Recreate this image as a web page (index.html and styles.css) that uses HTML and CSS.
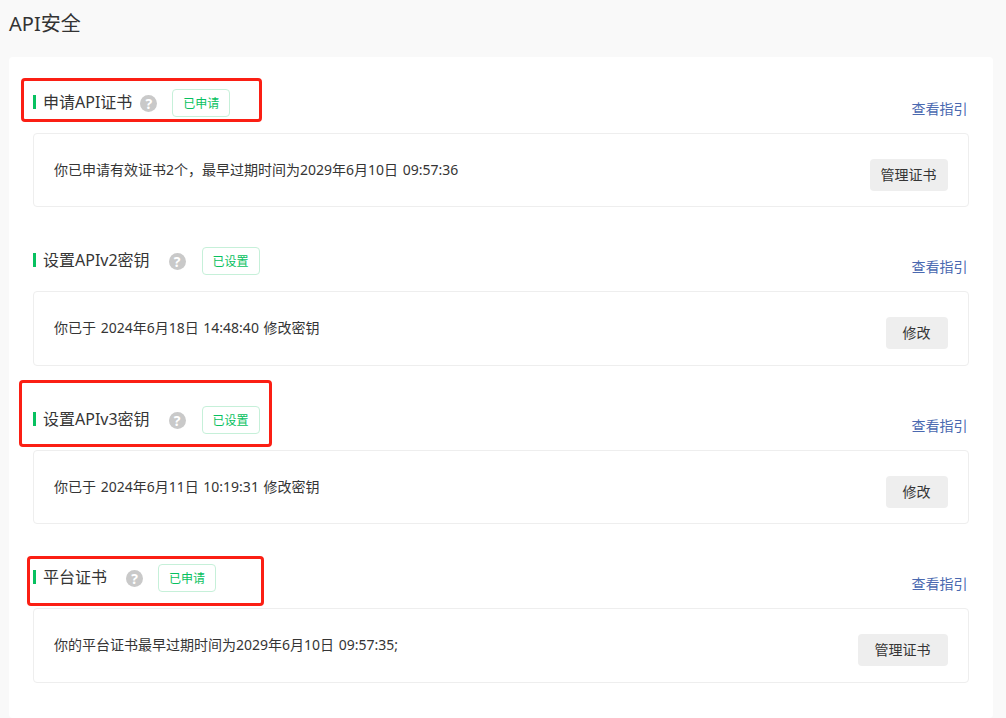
FILE: index.html
```html
<!DOCTYPE html>
<html lang="zh-CN">
<head>
    <meta charset="UTF-8">
    <meta name="viewport" content="width=device-width, initial-scale=1">
    <title>API安全</title>
    <link rel="stylesheet" href="styles.css">
</head>
<body>
<h1 class="page-title">API安全</h1>

<div class="panel">
    <!-- 申请API证书 -->
    <section class="block">
        <div class="block-head">
            <h2 class="block-title">申请API证书</h2>
            <span class="help">?</span>
            <span class="tag">已申请</span>
            <a class="guide" href="#">查看指引</a>
            <div class="mark mark-cert"></div>
        </div>
        <div class="box">
            <p class="box-text">你已申请有效证书2个，最早过期时间为2029年6月10日 09:57:36</p>
            <button class="btn btn-cert">管理证书</button>
        </div>
    </section>

    <!-- 设置APIv2密钥 -->
    <section class="block">
        <div class="block-head">
            <h2 class="block-title">设置APIv2密钥</h2>
            <span class="help help-key">?</span>
            <span class="tag">已设置</span>
            <a class="guide" href="#">查看指引</a>
        </div>
        <div class="box">
            <p class="box-text">你已于 2024年6月18日 14:48:40 修改密钥</p>
            <button class="btn btn-edit">修改</button>
        </div>
    </section>

    <!-- 设置APIv3密钥 -->
    <section class="block">
        <div class="block-head">
            <h2 class="block-title">设置APIv3密钥</h2>
            <span class="help help-key">?</span>
            <span class="tag">已设置</span>
            <a class="guide" href="#">查看指引</a>
            <div class="mark mark-v3"></div>
        </div>
        <div class="box">
            <p class="box-text">你已于 2024年6月11日 10:19:31 修改密钥</p>
            <button class="btn btn-edit">修改</button>
        </div>
    </section>

    <!-- 平台证书 -->
    <section class="block">
        <div class="block-head">
            <h2 class="block-title">平台证书</h2>
            <span class="help help-wide">?</span>
            <span class="tag">已申请</span>
            <a class="guide" href="#">查看指引</a>
            <div class="mark mark-platform"></div>
        </div>
        <div class="box">
            <p class="box-text">你的平台证书最早过期时间为2029年6月10日 09:57:35;</p>
            <button class="btn btn-platform">管理证书</button>
        </div>
    </section>
</div>
</body>
</html>
```
FILE: styles.css
```css
* { box-sizing: border-box; }
html, body { height: 100%; }
body {
  margin: 0;
  padding: 0 13px 0 9px;
  font-family: "Noto Sans", "Noto Sans CJK SC", sans-serif;
  background: #f9f9f9;
  color: #353535;
  overflow: hidden;
}
.page-title {
  margin: 0;
  height: 57px;
  padding-top: 10px;
  font-size: 20px;
  font-weight: 400;
  line-height: 28px;
  color: #333;
}
.panel {
  background: #fff;
  border-radius: 4px;
  padding: 32px 24px 35px;
}
.block { margin-bottom: 40px; }
.block:last-child { margin-bottom: 0; }
/* Title row with help icon, tag and guide link */
.block-head {
  position: relative;
  display: flex;
  align-items: flex-start;
  height: 28px;
  margin-bottom: 16px;
}
.block-title {
  margin: 0;
  padding-left: 10px;
  font-size: 16px;
  font-weight: 400;
  line-height: 27px;
  position: relative;
}
.block-title::before {
  content: "";
  position: absolute;
  left: 0;
  top: 6px;
  width: 3px;
  height: 14px;
  background: #07c160;
}
.help {
  width: 17px;
  height: 17px;
  margin: 6px 15px 0 8px;
  border-radius: 50%;
  background: #c9c9c9;
  color: #fff;
  font-size: 14px;
  font-weight: 700;
  line-height: 17px;
  text-align: center;
}
.help-wide { margin-left: 19px; }
.help-key { margin-left: 19px; margin-right: 16px; }
.tag {
  width: 58px;
  height: 28px;
  border: 1px solid #c6f0d9;
  border-radius: 4px;
  color: #07c160;
  font-size: 12px;
  line-height: 27px;
  text-align: center;
}
.guide {
  margin: 10px 1.5px 0 auto;
  font-size: 14px;
  line-height: 20px;
  color: #4a69b0;
  text-decoration: none;
}
.box {
  display: flex;
  align-items: flex-start;
  justify-content: space-between;
  height: 74.4px;
  padding: 25px 20px 0;
  border: 1px solid #eee;
  border-radius: 4px;
}
.box-text {
  margin: 1px 0 0;
  font-size: 14px;
  line-height: 20px;
  word-spacing: 1px;
}
.btn {
  height: 32px;
  padding: 0 1px 2px 0;
  border: none;
  border-radius: 4px;
  background: #eee;
  color: #353535;
  font-family: inherit;
  font-size: 14px;
}
.btn-cert { width: 78px; }
.btn-edit { width: 62px; }
.btn-platform { width: 90px; }
/* Red annotation frames drawn over the page */
.mark {
  position: absolute;
  border: 3px solid #fb1f14;
  border-radius: 4px;
  pointer-events: none;
}
.mark-cert { left: -12px; top: -11px; width: 241px; height: 44px; }
.mark-v3 { left: -14px; top: -26px; width: 253px; height: 67px; }
.mark-platform { left: -6px; top: -8px; width: 237px; height: 50px; }
```
